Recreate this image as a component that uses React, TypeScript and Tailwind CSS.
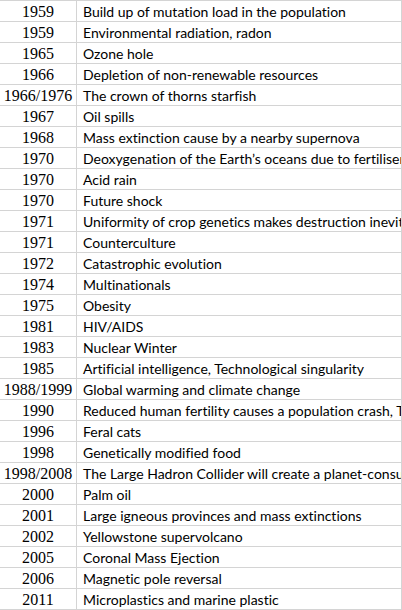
import React from 'react';

const rows: [string, string][] = [
  ['1959', 'Build up of mutation load in the population'],
  ['1959', 'Environmental radiation, radon'],
  ['1965', 'Ozone hole'],
  ['1966', 'Depletion of non-renewable resources'],
  ['1966/1976', 'The crown of thorns starfish'],
  ['1967', 'Oil spills'],
  ['1968', 'Mass extinction cause by a nearby supernova'],
  ['1970', 'Deoxygenation of the Earth\u2019s oceans due to fertiliser runoff'],
  ['1970', 'Acid rain'],
  ['1970', 'Future shock'],
  ['1971', 'Uniformity of crop genetics makes destruction inevitable'],
  ['1971', 'Counterculture'],
  ['1972', 'Catastrophic evolution'],
  ['1974', 'Multinationals'],
  ['1975', 'Obesity'],
  ['1981', 'HIV/AIDS'],
  ['1983', 'Nuclear Winter'],
  ['1985', 'Artificial intelligence, Technological singularity'],
  ['1988/1999', 'Global warming and climate change'],
  ['1990', 'Reduced human fertility causes a population crash, The'],
  ['1996', 'Feral cats'],
  ['1998', 'Genetically modified food'],
  ['1998/2008', 'The Large Hadron Collider will create a planet-consuming black hole'],
  ['2000', 'Palm oil'],
  ['2001', 'Large igneous provinces and mass extinctions'],
  ['2002', 'Yellowstone supervolcano'],
  ['2005', 'Coronal Mass Ejection'],
  ['2006', 'Magnetic pole reversal'],
  ['2011', 'Microplastics and marine plastic'],
];

export default function App() {
  return (
    <div className="w-[402px] h-[610px] bg-white overflow-hidden">
      <div className="border-t border-[#d4d4d4]">
        {rows.map(([year, text], i) => (
          <div key={i} className="flex h-[21px] border-b border-[#d4d4d4]">
            {/* year column */}
            <div className="w-[77px] shrink-0 border-r border-[#d4d4d4] flex items-center justify-center pt-[2px] text-[16px] text-black font-['Liberation_Serif',serif] whitespace-nowrap leading-none">
              {year}
            </div>
            {/* description column, clipped like a sheet cell */}
            <div className="w-[325px] shrink-0 border-r border-[#d4d4d4] overflow-hidden flex items-center pt-[2px] pl-[6px] text-[14px] text-black font-['Lato',sans-serif] [font-variant-ligatures:none] whitespace-nowrap leading-none">
              {text}
            </div>
          </div>
        ))}
      </div>
    </div>
  );
}
